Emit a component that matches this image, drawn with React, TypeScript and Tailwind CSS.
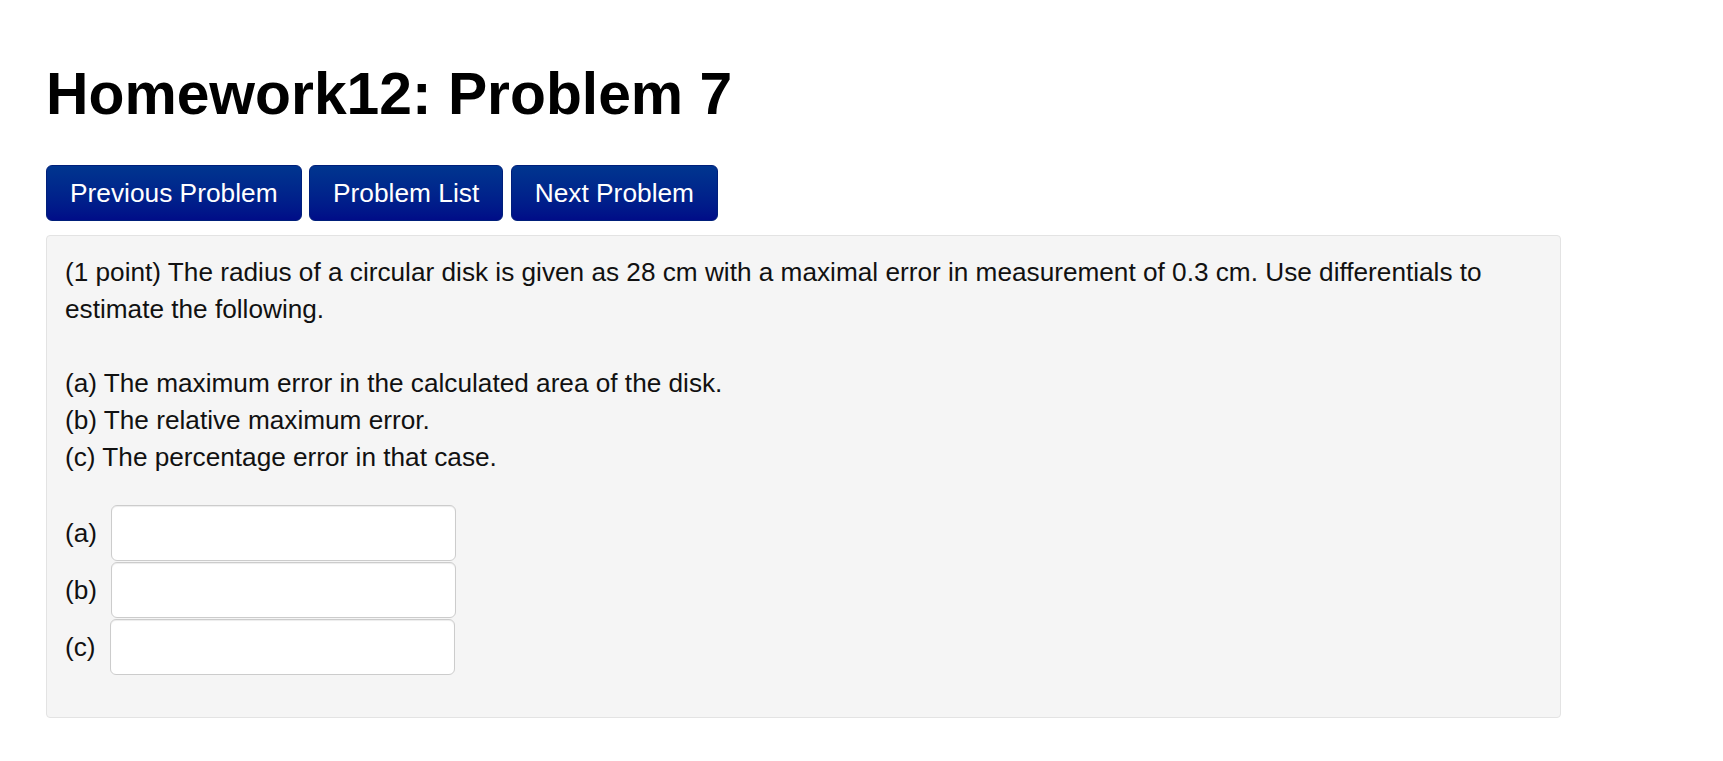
import React from 'react';

const navButtons = ['Previous Problem', 'Problem List', 'Next Problem'];

const parts = ['a', 'b', 'c'];

const App: React.FC = () => {
  return (
    <div className="min-h-screen bg-white text-black font-['Liberation_Sans',Arial,sans-serif]">
      <div className="pl-[46px] pt-[62px]">
        <h1 className="text-[58.8px] leading-[64px] font-bold">Homework12: Problem 7</h1>

        <div className="mt-[39px] flex gap-[7.5px]">
          {navButtons.map((label) => (
            <button
              key={label}
              className="h-[56px] px-[23px] rounded-[6px] border border-[#001f7a] bg-gradient-to-b from-[#00358f] to-[#000c88] text-white text-[26.3px] leading-none"
            >
              {label}
            </button>
          ))}
        </div>

        <div className="mt-[14px] w-[1515px] h-[483px] rounded-[4px] border border-[#e3e3e3] bg-[#f5f5f5] px-[18px] pt-[18px]">
          <div className="text-[26.2px] leading-[37px] text-[#111]">
            <p>
              (1 point) The radius of a circular disk is given as 28 cm with a maximal error in measurement of 0.3 cm. Use
              differentials to estimate the following.
            </p>
            <p className="mt-[37px]">(a) The maximum error in the calculated area of the disk.</p>
            <p>(b) The relative maximum error.</p>
            <p>(c) The percentage error in that case.</p>
          </div>

          <div className="mt-[29px] flex flex-col gap-[1px]">
            {parts.map((p) => (
              <div key={p} className="flex items-center gap-[14px]">
                <span className="text-[26.2px] leading-[37px] text-[#111]">({p})</span>
                <input
                  type="text"
                  className="w-[345px] h-[56px] rounded-[6px] border border-[#cccccc] bg-white shadow-[inset_0_1px_1px_rgba(0,0,0,0.075)] outline-none px-3 text-[22px]"
                />
              </div>
            ))}
          </div>
        </div>
      </div>
    </div>
  );
};

export default App;
